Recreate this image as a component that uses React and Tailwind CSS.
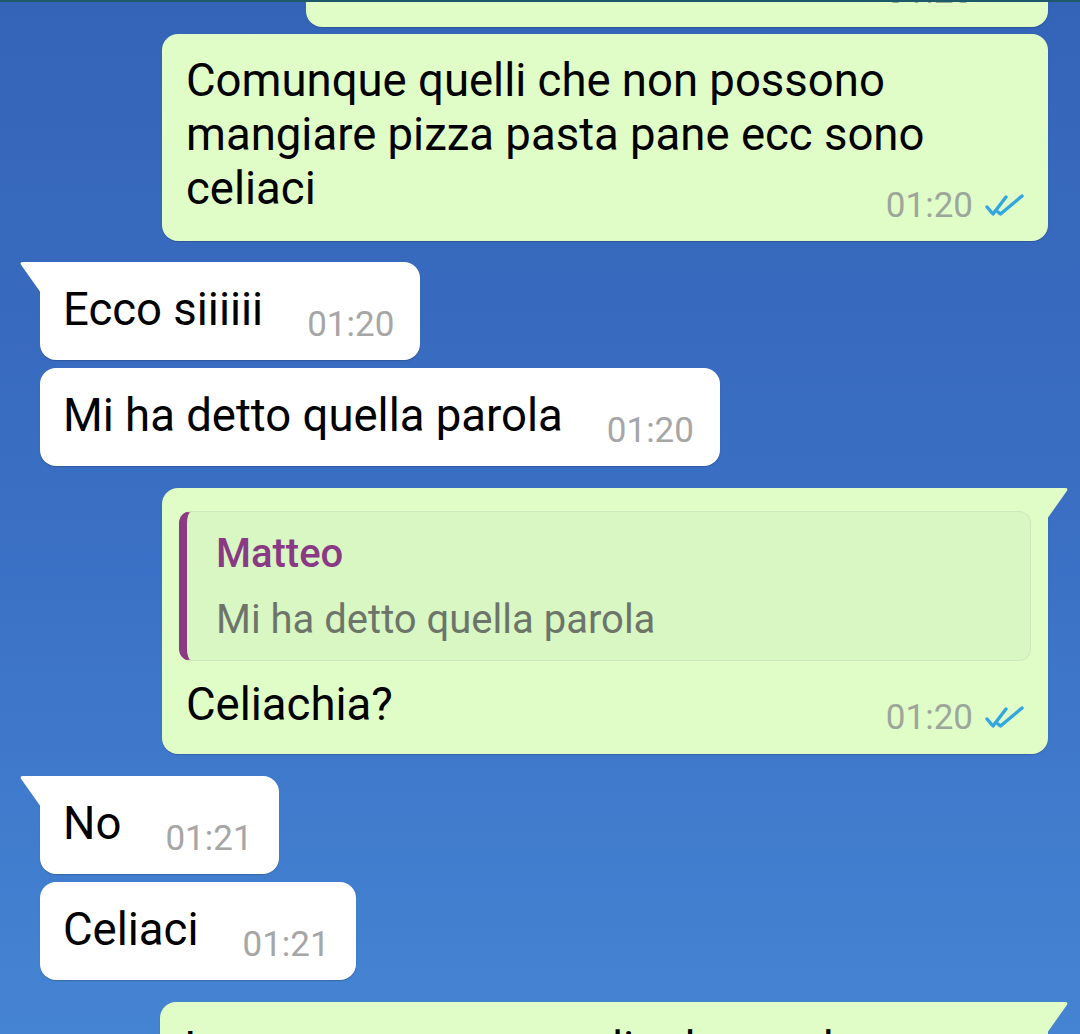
import React from 'react';

const font = { fontFamily: 'Roboto, "Noto Sans", Arial, sans-serif' };

function DoubleCheck() {
    return (
        <svg width="40" height="26" viewBox="0 0 40 26" fill="none" stroke="#32a7df" strokeWidth="3.4" strokeLinecap="round" strokeLinejoin="round" className="ml-[12px]">
            <path d="M2 14 L8 21 L21 4" />
            <path d="M13 19 L15.5 21 L37 3" />
        </svg>
    );
}

function InTail() {
    return (
        <svg width="22" height="32" viewBox="0 0 22 32" className="absolute left-[-21px] top-0">
            <path d="M22 0 L4 0 Q0 0 2.5 3.5 L22 31 Z" fill="#ffffff" />
        </svg>
    );
}

function OutTail() {
    return (
        <svg width="22" height="32" viewBox="0 0 22 32" className="absolute right-[-21px] top-0">
            <path d="M0 0 L18 0 Q22 0 19.5 3.5 L0 31 Z" fill="#e0fdc8" />
        </svg>
    );
}

function Incoming({ text, time, tail, className }) {
    return (
        <div className={`relative self-start ml-[40px] flex items-end bg-white rounded-[16px] pl-[23px] pr-[26px] pt-[21px] pb-[15px] shadow-[0_1px_1px_rgba(0,0,0,0.18)] ${tail ? 'rounded-tl-none' : ''} ${className}`}>
            {tail && <InTail />}
            <span className="text-[45.5px] leading-[54px] text-black pb-[8px]">{text}</span>
            <span className="ml-[44px] text-[35px] leading-[40px] text-[#a6a6a6]">{time}</span>
        </div>
    );
}

function Stamp({ time, className }) {
    return (
        <div className={`flex items-center justify-end h-[40px] ${className}`}>
            <span className="text-[35px] leading-[40px] text-[#9da69a]">{time}</span>
            <DoubleCheck />
        </div>
    );
}

export default function App() {
    return (
        <div style={font} className="h-[1034px] w-[1080px] overflow-hidden border-t-2 border-[#1c5a6a] bg-[linear-gradient(180deg,#3464b7_0%,#3a6fc4_50%,#4584d3_100%)] flex flex-col">
            {/* previous message, cut off */}
            <div className="self-end mr-[32px] mt-[-30px] w-[742px] bg-[#e0fdc8] rounded-[16px] pl-[24px] pr-[23px] pb-[15px] shadow-[0_1px_1px_rgba(0,0,0,0.18)]">
                <Stamp time="01:20" />
            </div>

            <div className="self-end mr-[32px] mt-[7px] w-[886px] bg-[#e0fdc8] rounded-[16px] pl-[24px] pr-[23px] pt-[20px] pb-[15px] shadow-[0_1px_1px_rgba(0,0,0,0.18)]">
                <p className="text-[45.5px] leading-[54px] text-black">
                    Comunque quelli che non possono<br />
                    mangiare pizza pasta pane ecc sono<br />
                    celiaci
                </p>
                <Stamp time="01:20" className="mt-[-30px]" />
            </div>

            <Incoming tail text="Ecco siiiiii" time="01:20" className="mt-[21px]" />
            <Incoming text="Mi ha detto quella parola" time="01:20" className="mt-[8px]" />

            <div className="relative self-end mr-[32px] mt-[22px] w-[886px] bg-[#e0fdc8] rounded-[16px] rounded-tr-none pl-[24px] pr-[23px] pt-[23px] pb-[16px] shadow-[0_1px_1px_rgba(0,0,0,0.18)]">
                <OutTail />
                <div className="ml-[-7px] mr-[-6px] rounded-[12px] bg-[#d9f7c2] border border-[#cfe8bb] border-l-[8px] border-l-[#8d3a84] pl-[29px] pt-[20px] pb-[18px]">
                    <div className="text-[40px] leading-[44px] font-medium text-[#8a3a85]">Matteo</div>
                    <div className="mt-[22px] text-[40px] leading-[44px] text-[#6d756b]">Mi ha detto quella parola</div>
                </div>
                <p className="mt-[17px] text-[45.5px] leading-[54px] text-black">Celiachia?</p>
                <Stamp time="01:20" className="mt-[-34px]" />
            </div>

            <Incoming tail text="No" time="01:21" className="mt-[22px]" />
            <Incoming text="Celiaci" time="01:21" className="mt-[8px]" />

            <div className="relative self-end mr-[32px] mt-[22px] w-[888px] bg-[#e0fdc8] rounded-[16px] rounded-tr-none pl-[24px] pr-[23px] pt-[20px] pb-[15px] shadow-[0_1px_1px_rgba(0,0,0,0.18)]">
                <OutTail />
                <p className="text-[45.5px] leading-[54px] text-black">Io non so nemmeno dire la parola "celiachia"</p>
            </div>
        </div>
    );
}
